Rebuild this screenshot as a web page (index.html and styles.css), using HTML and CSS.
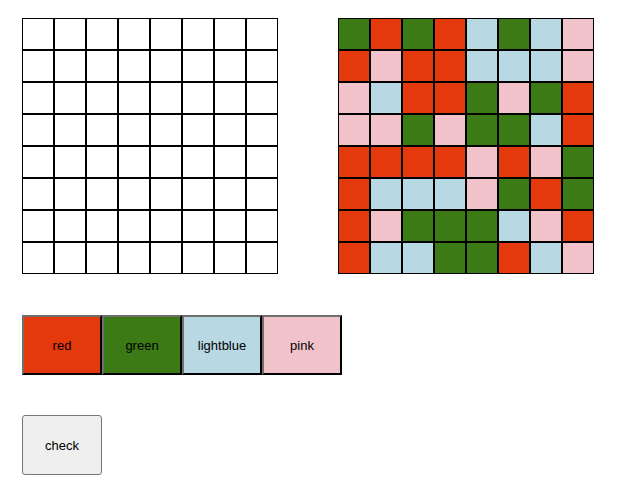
FILE: index.html
```html
<!DOCTYPE html>
<html>
<head>
    <link rel="stylesheet" href="styles.css">
</head>
<body>
    <div class="boards">
        <div class="board" id="answer"></div>
        <div class="board" id="target"></div>
    </div>

    <div class="palette">
        <button class="color red">red</button>
        <button class="color green">green</button>
        <button class="color lightblue">lightblue</button>
        <button class="color pink">pink</button>
    </div>

    <button class="check">check</button>

    <script>
        var pattern = [
            'GRGRBGBP',
            'RPRRBBBP',
            'PBRRGPGR',
            'PPGPGGBR',
            'RRRRPRPG',
            'RBBBPGRG',
            'RPGGGBPR',
            'RBBGGRBP'
        ];
        var names = { R: 'red', G: 'green', B: 'lightblue', P: 'pink' };

        var answer = document.getElementById('answer');
        var target = document.getElementById('target');

        for (var i = 0; i < 64; i++) {
            var empty = document.createElement('div');
            empty.className = 'cell';
            answer.appendChild(empty);

            var c = document.createElement('div');
            c.className = 'cell ' + names[pattern[Math.floor(i / 8)][i % 8]];
            target.appendChild(c);
        }
    </script>
</body>
</html>
```

FILE: styles.css
```css
body {
    margin: 0;
    padding: 18px 22px;
    font-family: "Liberation Sans", Arial, sans-serif;
    background: #fff;
}

.boards {
    display: flex;
    gap: 60px;
}

.board {
    display: grid;
    grid-template-columns: repeat(8, 32px);
    grid-auto-rows: 32px;
}

.cell {
    border: 1px solid #000;
    background: #fff;
}

.red { background: #e4380d; }
.green { background: #3c7a15; }
.lightblue { background: #b8d8e4; }
.pink { background: #f2c2cb; }

.palette {
    display: flex;
    margin-top: 41px;
}

.color {
    width: 80px;
    height: 60px;
    margin: 0;
    padding: 0;
    border: 2px outset #767676;
    border-color: #6f6f6f #222 #222 #6f6f6f;
    font-family: "Liberation Sans", Arial, sans-serif;
    font-size: 13px;
    color: #000;
    cursor: pointer;
}

.check {
    display: block;
    margin-top: 40px;
    width: 80px;
    height: 60px;
    padding: 0;
    border: 1px solid #767676;
    border-radius: 3px;
    background: #efefef;
    font-family: "Liberation Sans", Arial, sans-serif;
    font-size: 13px;
    color: #000;
    cursor: pointer;
}
```
